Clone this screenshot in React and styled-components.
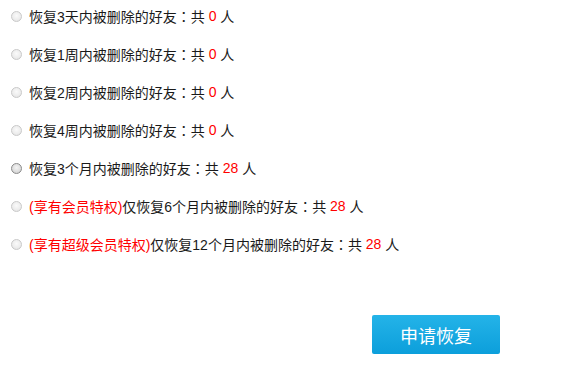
import React from 'react'
import styled, { createGlobalStyle } from 'styled-components'

const GlobalStyle = createGlobalStyle`
	body {
		margin: 0;
		background: #fff;
		font-family: 'Liberation Sans', 'Noto Sans CJK SC', sans-serif;
	}
`

const Wrapper = styled.div`
	width: 588px;
	height: 369px;
	padding-top: 6px;
	box-sizing: border-box;
	color: #1a1a1a;
	font-size: 14px;
`

const OptionList = styled.ul`
	margin: 0;
	padding: 0 0 0 11px;
	list-style: none;
`

const OptionItem = styled.li`
	display: flex;
	align-items: center;
	height: 20px;
	margin-bottom: 18px;
	white-space: pre;
`

const Radio = styled.span`
	display: inline-block;
	width: 11px;
	height: 11px;
	margin-right: 7px;
	border-radius: 50%;
	box-sizing: border-box;
	border: 1px solid ${(props) => (props.enabled ? '#8a8a8a' : '#c9c9c9')};
	background: ${(props) =>
		props.enabled
			? 'radial-gradient(circle at 50% 40%, #f4f4f4 0%, #dcdcdc 60%, #c4c4c4 100%)'
			: 'radial-gradient(circle at 50% 40%, #fafafa 0%, #ececec 60%, #dddddd 100%)'};
`

const Red = styled.span`
	color: #ff0000;
`

// centred full-width colon, as in the original font
const Colon = styled.span`
	font-family: 'Noto Sans CJK TC', sans-serif;
`

const Footer = styled.div`
	display: flex;
	justify-content: flex-end;
	padding: 43px 88px 0 0;
`

const ApplyButton = styled.button`
	width: 128px;
	height: 39px;
	border: none;
	border-radius: 2px;
	background: linear-gradient(to bottom, #24b3e8, #0c9fdb);
	color: #fff;
	font-size: 18px;
	font-family: 'Liberation Sans', 'Noto Sans CJK SC', sans-serif;
	cursor: pointer;
`

const options = [
	{ label: '恢复3天内被删除的好友', count: 0 },
	{ label: '恢复1周内被删除的好友', count: 0 },
	{ label: '恢复2周内被删除的好友', count: 0 },
	{ label: '恢复4周内被删除的好友', count: 0 },
	{ label: '恢复3个月内被删除的好友', count: 28, enabled: true },
	{ vip: '(享有会员特权)', label: '仅恢复6个月内被删除的好友', count: 28 },
	{ vip: '(享有超级会员特权)', label: '仅恢复12个月内被删除的好友', count: 28 },
]

export default function App() {
	return (
		<Wrapper>
			<GlobalStyle />
			<OptionList>
				{options.map((o, i) => (
					<OptionItem key={i}>
						<Radio enabled={o.enabled} />
						{o.vip && <Red>{o.vip}</Red>}
						{o.label}
						<Colon>：</Colon>
						{'共 '}
						<Red>{o.count}</Red>
						{' 人'}
					</OptionItem>
				))}
			</OptionList>
			<Footer>
				<ApplyButton>申请恢复</ApplyButton>
			</Footer>
		</Wrapper>
	)
}
